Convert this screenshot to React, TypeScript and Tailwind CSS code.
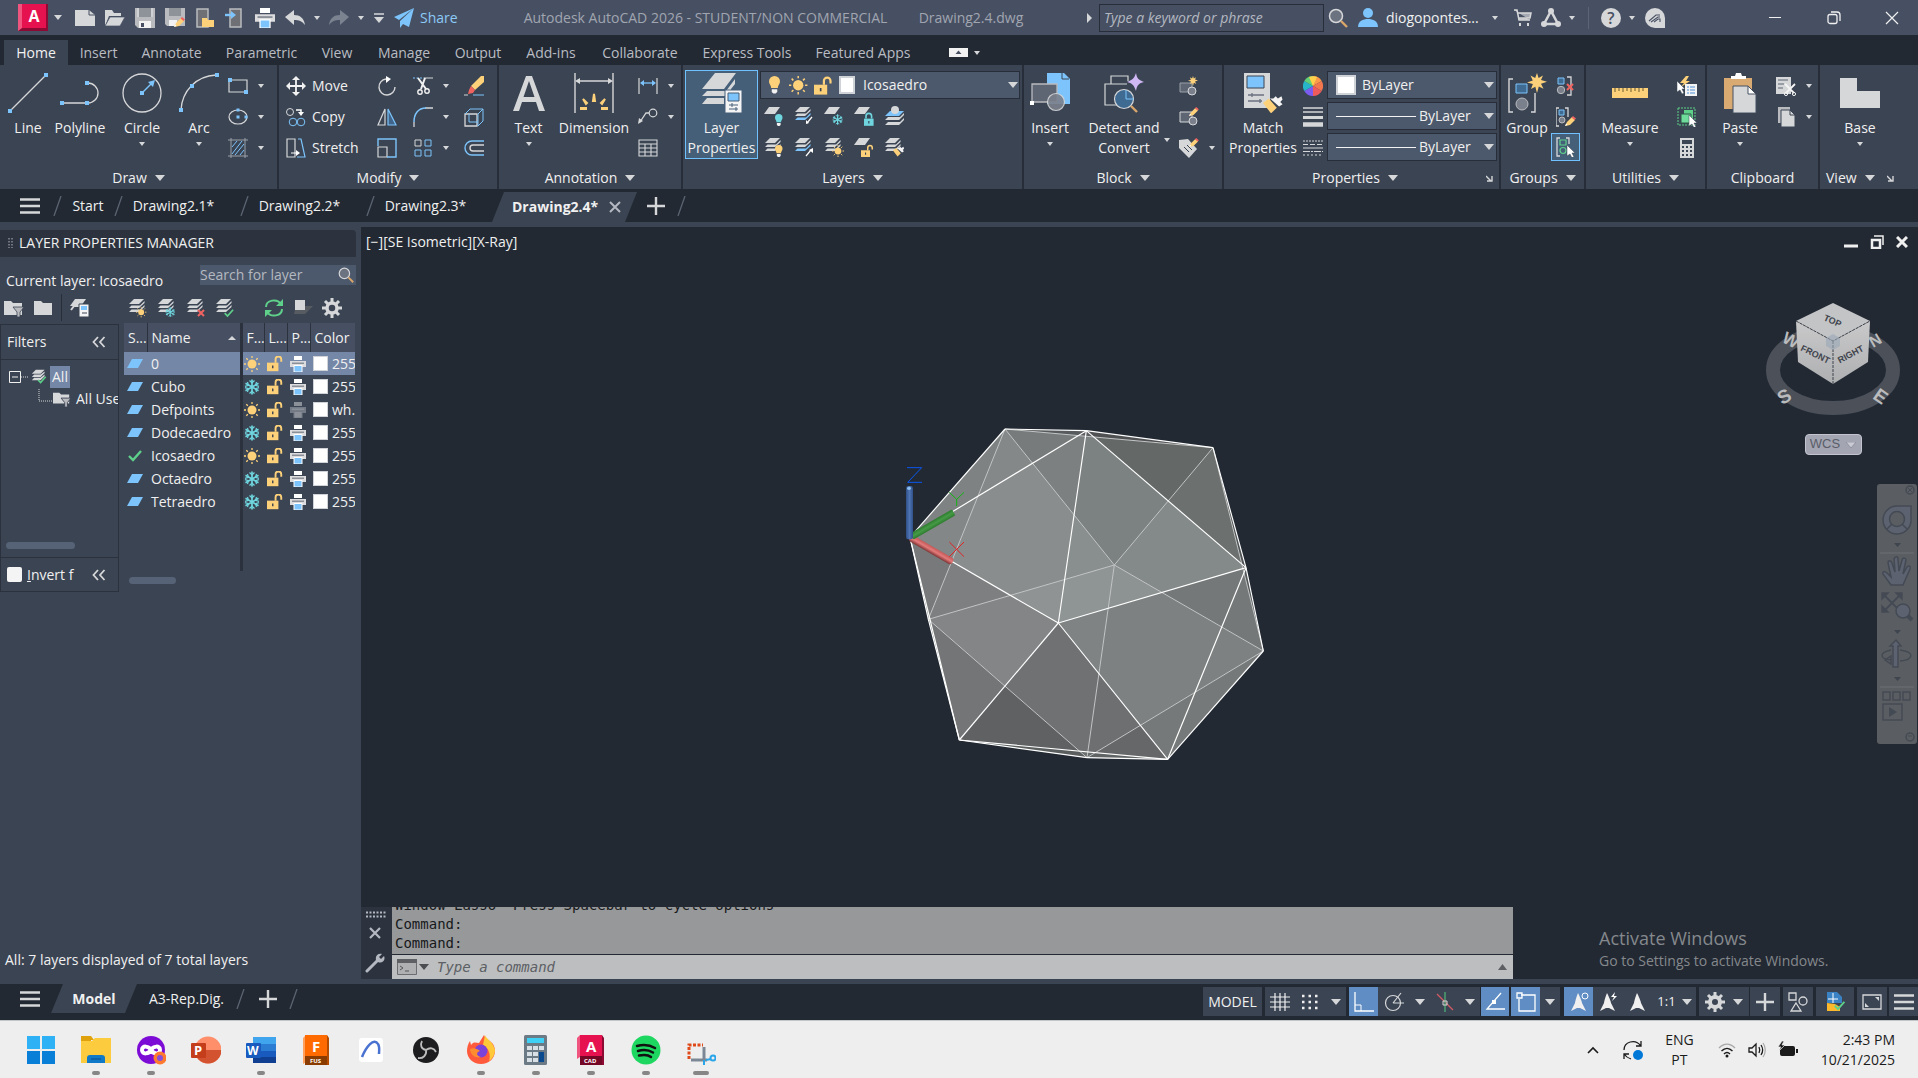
import React from 'react';
import { clsx } from 'clsx';

type GlyphProps = { x?: number; y?: number; s?: number };

const GREY = '#d6d7d9';
const BLUE = '#7cc4fb';
const GOLD = '#fdd17a';
const GREEN = '#5fd08a';
const CYAN = '#6fd6df';
const RED = '#ef6461';

const Svg: React.FC<{ w?: number; h?: number; vb?: string; className?: string; children: React.ReactNode }> = ({
  w = 20,
  h = w,
  vb,
  className,
  children,
}) => (
  <svg width={w} height={h} viewBox={vb ?? `0 0 ${w} ${h}`} fill="none" aria-hidden="true" className={clsx('shrink-0', className)}>
    {children}
  </svg>
);

const Caret: React.FC<{ big?: boolean; className?: string }> = ({ big, className }) =>
  big ? (
    <Svg w={10} h={6} className={className}>
      <path d="M0 0h10L5 6z" fill={GREY} />
    </Svg>
  ) : (
    <Svg w={6} h={4} className={className}>
      <path d="M0 0h6L3 4z" fill={GREY} />
    </Svg>
  );

/* ---------- glyph parts shared by several icons ---------- */

const at = ({ x = 0, y = 0, s = 1 }: GlyphProps) => `translate(${x} ${y}) scale(${s})`;

const Bulb: React.FC<GlyphProps & { color?: string }> = ({ color = GOLD, ...p }) => (
  <g transform={at(p)}>
    <path d="M5 0a5 5 0 0 1 5 5c0 2.500-2 3.500-2 6H2c0-2.500-2-3.500-2-6a5 5 0 0 1 5-5z" fill={color} />
    <path d="M2.500 12h5v2.500L6 16H4l-1.500-1.500z" fill="#f2f2f2" />
  </g>
);

const Sun: React.FC<GlyphProps> = (p) => (
  <g transform={at(p)}>
    <circle cx="8" cy="8" r="4.500" fill={GOLD} />
    <path d="M8 0v2M8 14v2M0 8h2M14 8h2M2.300 2.300l1.500 1.500M12.200 12.200l1.500 1.500M2.300 13.700l1.500-1.500M12.200 3.800l1.500-1.500" stroke={GOLD} strokeWidth="1.300" />
  </g>
);

const Snow: React.FC<GlyphProps> = (p) => (
  <g transform={at(p)} stroke={CYAN} strokeWidth="1.700">
    <path d="M8 0.500v15M1.500 4.200l13 7.600M1.500 11.800l13-7.600" />
    <path d="M5.500 1.500L8 4l2.500-2.500M5.500 14.500L8 12l2.500 2.500M1 7.300l3.400-.9-.9-3.400M15 8.700l-3.400.9.9 3.400M1 8.700l3.400.9-.9 3.400M15 7.300l-3.400-.9.9-3.400" strokeWidth="1.200" />
  </g>
);

const Lock: React.FC<GlyphProps & { open?: boolean; color?: string }> = ({ open = true, color = GOLD, ...p }) => (
  <g transform={at(p)}>
    <path d="M0 7h12v9H0z" fill={color} />
    <path d={open ? 'M9 7V3.500a3 3 0 0 1 6 0V6' : 'M2.500 7V4a3.500 3.500 0 0 1 7 0v3'} stroke={color} strokeWidth="2" />
    <path d="M5.300 10h1.500v3H5.300z" fill="#3b4453" />
  </g>
);

const Pencil: React.FC<GlyphProps> = (p) => (
  <g transform={at(p)}>
    <path d="M0 10l2-4 5-5 3 3-5 5z" fill={GOLD} />
    <path d="M6.500 1.500l1.500-1.500 3 2.500-1.500 1.500z" fill={RED} />
    <path d="M0 10l1.200-2.500 1.400 1.400z" fill="#fff" />
  </g>
);

const Star: React.FC<GlyphProps> = (p) => (
  <g transform={at(p)}>
    <path d="M10 0l1.600 5 4.400-2.500L14 7l6 1.800-6 2 2.500 5-4.700-2.300L10 20l-1.700-6.200L4 16l1.900-5L0 9.500l5.800-2L3.500 2.600l4.700 2.500z" fill={GOLD} />
  </g>
);

const Cursor: React.FC<GlyphProps> = (p) => (
  <g transform={at(p)}>
    <path d="M0 0l8 8H5l2 4-2 1-2-4-3 2z" fill="#fff" stroke="#3b4453" strokeWidth=".5" />
  </g>
);

const Brush: React.FC<GlyphProps> = (p) => (
  <g transform={at(p)}>
    <path d="M0 7l5-4 7 8-5 5z" fill={GOLD} />
    <path d="M6 3l3 0 2-2 2 2 3-2 1 3-2 2 2 2-3 2z" fill="#f4f4f4" />
  </g>
);

const Check: React.FC<GlyphProps> = (p) => (
  <g transform={at(p)}>
    <path d="M1 6l4 4 8-9" stroke={GREEN} strokeWidth="2.400" />
  </g>
);

const Cross: React.FC<GlyphProps> = (p) => (
  <g transform={at(p)}>
    <path d="M0 0l6 6M6 0L0 6" stroke={RED} strokeWidth="2" />
  </g>
);

const Stack: React.FC<{ blue?: number; children?: React.ReactNode }> = ({ blue, children }) => (
  <Svg>
    <path d="M6 1h10l-5 5H1z" fill={blue === 0 ? BLUE : GREY} />
    <path d="M1 10l2.500-2.500H12L16.500 3v2L11 10z" fill={blue === 1 ? BLUE : GREY} />
    <path d="M1 14l2.500-2.500H12L16.500 7v2L11 14z" fill={blue === 2 ? BLUE : GREY} />
    {children}
  </Svg>
);

const Sheet: React.FC<{ children?: React.ReactNode }> = ({ children }) => (
  <Svg>
    <path d="M5 1h11l-5 7H0z" fill={GREY} />
    {children}
  </Svg>
);

const Search: React.FC<{ className?: string }> = ({ className }) => (
  <Svg className={className}>
    <circle cx="8" cy="8" r="6.500" fill="#6c7380" stroke={GREY} strokeWidth="1.500" />
    <path d="M13 13l6 6" stroke="#d9a66b" strokeWidth="2.400" />
  </Svg>
);

const Printer: React.FC<{ off?: boolean; w?: number }> = ({ off, w = 16 }) => (
  <Svg w={w} vb="0 0 16 16">
    <path d="M4 0h8v4H4z" fill={off ? '#8a8f98' : '#fff'} />
    <path d="M0 5h16v6H0z" fill={off ? '#757b86' : '#dcdcde'} />
    <path d="M2 6.500h12v1.500H2z" fill="#8b9098" />
    <path d="M4 9.500h8V16H4z" fill={off ? '#8a8f98' : BLUE} stroke={off ? '#757b86' : '#fff'} />
  </Svg>
);

const Hamburger: React.FC = () => (
  <Svg w={20} h={16}>
    <path d="M0 1.500h20M0 8h20M0 14.500h20" stroke={GREY} strokeWidth="2.600" />
  </Svg>
);

const Plus: React.FC = () => (
  <Svg w={18}>
    <path d="M9 0v18M0 9h18" stroke={GREY} strokeWidth="2.400" />
  </Svg>
);

const Slash: React.FC<{ className?: string }> = ({ className }) => (
  <Svg w={9} h={20} className={className}>
    <path d="M8 0L1 20" stroke="#5b6472" strokeWidth="1.300" />
  </Svg>
);

const Launcher: React.FC = () => (
  <Svg w={7}>
    <path d="M0 1l5 5M6 1v5H1" stroke={GREY} strokeWidth="1.400" />
  </Svg>
);

/* ---------- ribbon building blocks ---------- */

const Panel: React.FC<{ title: string; className: string; launcher?: boolean; noCaret?: boolean; children: React.ReactNode }> = ({
  title,
  className,
  launcher,
  noCaret,
  children,
}) => (
  <section className={clsx('flex shrink-0 flex-col border-r-2 border-[#272e39]', className)}>
    <div className="flex h-[100px]">{children}</div>
    <div className="flex h-6 items-center pt-0.5">
      <button className="flex flex-1 items-center justify-center gap-2">
        {title}
        {!noCaret && <Caret big />}
      </button>
      {launcher && (
        <button className="mr-1.5" aria-label={`${title} settings`}>
          <Launcher />
        </button>
      )}
    </div>
  </section>
);

const Big: React.FC<{ label: string; className: string; caret?: boolean; children: React.ReactNode }> = ({ label, className, caret, children }) => (
  <button className={clsx('flex shrink-0 flex-col items-center pt-2', className)}>
    <span className="flex h-10 items-center justify-center">{children}</span>
    <span className="mt-[5px] text-center leading-5">{label}</span>
    {caret && <Caret className="mt-1" />}
  </button>
);

const Small: React.FC<{ name: string; caret?: boolean; children: React.ReactNode }> = ({ name, caret, children }) => (
  <button aria-label={name} className="flex h-[31px] items-center gap-[10px]">
    {children}
    {caret && <Caret />}
  </button>
);

const Tool: React.FC<{ label: string; children: React.ReactNode }> = ({ label, children }) => (
  <button className="flex h-[31px] items-center gap-1.5">
    {children}
    {label}
  </button>
);

const Column: React.FC<{ className?: string; children: React.ReactNode }> = ({ className, children }) => (
  <div className={clsx('flex shrink-0 flex-col pt-[5px]', className)}>{children}</div>
);

const dot = (x: number, y: number, s = 4) => <rect x={x - s / 2} y={y - s / 2} width={s} height={s} fill={BLUE} />;

/* ---------- title bar ---------- */

const TitleBar: React.FC = () => (
  <header className="flex h-[35px] shrink-0 items-center bg-[#475063] text-[#a0a5b0]">
    <button className="ml-[18px] flex items-center gap-1.5" aria-label="Application menu">
      <span className="flex h-[27px] w-[30px] items-center justify-center border-b-3 border-l-4 border-r-2 border-b-[#8c0a33] border-l-[#f0557f] border-r-[#8c0a33] bg-[#e6114f] text-base font-bold leading-5 text-white">
        A
      </span>
      <Caret big className="h-[5px] w-2" />
    </button>
    <div className="ml-[13px] flex items-center gap-[10px]">
      <button aria-label="New"><Svg><path d="M0 2h14l6 5v11H0z" fill={GREY} /><path d="M14 2v5h6" stroke="#475063" /></Svg></button>
      <button aria-label="Open"><Svg><path d="M0 18V2h7l2 3h7v3H4z" fill={GREY} /><path d="M5 9h15l-5 9H0z" fill={GREY} stroke="#475063" strokeWidth=".7" /></Svg></button>
      <button aria-label="Save"><Svg><path d="M0 0h20v20H3l-3-3z" fill="#b9bbbf" /><path d="M4 0h12v9H4z" fill="#8e9299" /><path d="M2 0h2v9H2zM16 0h2v9h-2z" fill="#d0d1d4" /><path d="M4 13h12v7H4z" fill="#f2f2f2" /><path d="M6 15h3v4H6z" fill="#475063" /></Svg></button>
      <button aria-label="Save as"><Svg><path d="M0 0h20v18H2l-2-2z" fill="#b9bbbf" /><path d="M4 0h12v8H4z" fill="#8e9299" /><path d="M4 12h8v6H4z" fill="#f2f2f2" /><Pencil x={9} y={9} /></Svg></button>
      <button aria-label="Open from web"><Svg><path d="M2 1h11v18H2z" fill="#6f7075" stroke="#b9bbbf" strokeWidth="1.500" /><path d="M7 19V10h5l1 2h6v7z" fill={GOLD} /></Svg></button>
      <button aria-label="Save to web"><Svg><path d="M5 1h11v18H5z" fill="#6f7075" stroke="#b9bbbf" strokeWidth="1.500" /><path d="M0 7h8" stroke={BLUE} strokeWidth="2.400" /><path d="M6 3l5 4-5 4z" fill={BLUE} /></Svg></button>
      <button aria-label="Plot"><Printer w={20} /></button>
      <button aria-label="Undo"><Svg><path d="M0 9l9-7v5c6 0 10 3 11 10-3-4-6-5-11-5v5z" fill={GREY} /></Svg></button>
    </div>
    <button className="ml-[9px]" aria-label="Undo history"><Caret /></button>
    <button className="ml-[9px]" aria-label="Redo"><Svg><path d="M20 9l-9-7v5C5 7 1 10 0 17c3-4 6-5 11-5v5z" fill="#7b8391" /></Svg></button>
    <button className="ml-[9px]" aria-label="Redo history"><Caret /></button>
    <button className="ml-[10px]" aria-label="Customize"><Svg w={10}><path d="M0 1h10" stroke={GREY} strokeWidth="1.500" /><path d="M0 4h10L5 10z" fill={GREY} /></Svg></button>
    <button className="ml-[10px] flex items-center gap-1.5 text-[#8ccaf7]">
      <Svg><path d="M20 0L0 9l5 3zM20 0L6 13v7l3-4 6 3z" fill={BLUE} /></Svg>
      Share
    </button>
    <span className="ml-[66px] w-[395px] whitespace-nowrap">Autodesk AutoCAD 2026 - STUDENT/NON COMMERCIAL</span>
    <span className="whitespace-nowrap">Drawing2.4.dwg</span>
    <span className="flex-1" />
    <Svg w={5} h={10}><path d="M0 0l5 5-5 5z" fill={GREY} /></Svg>
    <input
      type="text"
      aria-label="Type a keyword or phrase"
      placeholder="Type a keyword or phrase"
      className="ml-[7px] h-7 w-[225px] border border-[#272e39] bg-transparent px-1 italic placeholder:text-[#b4b8c0]"
    />
    <button aria-label="Search" className="ml-1"><Search /></button>
    <button className="ml-[10px] flex items-center gap-2 whitespace-nowrap text-[#f0f0f0]">
      <Svg><circle cx="10" cy="5" r="5" fill={BLUE} /><path d="M0 19c0-6 5-8 10-8s10 2 10 8z" fill={BLUE} /></Svg>
      <span className="w-[98px] text-left">diogopontes...</span>
      <Caret />
    </button>
    <button className="ml-4" aria-label="App store"><Svg w={18}><path d="M0 1h3l2 10h11M4 4h13l-1 5H5" stroke={GREY} strokeWidth="1.500" fill="#a5a9b2" /><path d="M5 14h2v3H5zM13 14h2v3h-2z" fill={GREY} /></Svg></button>
    <button className="ml-[9px] flex items-center gap-2" aria-label="Autodesk cloud">
      <Svg><path d="M10 3L3 16h14z" stroke={GREY} strokeWidth="2.500" /><circle cx="10" cy="3" r="3" fill={GREY} /><circle cx="3" cy="16" r="3" fill={GREY} /><circle cx="17" cy="16" r="3" fill={GREY} /></Svg>
      <Caret />
    </button>
    <span className="ml-[13px] h-[22px] w-px bg-[#5c6577]" />
    <button className="ml-3 flex items-center gap-2" aria-label="Help">
      <span className="flex size-5 items-center justify-center rounded-full bg-[#d6d7d9] text-base font-semibold leading-5 text-[#475063]">?</span>
      <Caret />
    </button>
    <button className="ml-2.5" aria-label="Assistant"><Svg><path d="M10 0a10 10 0 0 1 10 10v10H10a10 10 0 0 1 0-20z" fill={GREY} /><path d="M4 13l7-6h4M6 14l7-5h2M9 14l4-3h2v3" stroke="#475063" strokeWidth="1.100" /></Svg></button>
    <button className="ml-[103px]" aria-label="Minimize"><Svg w={14}><path d="M1 6.500h12" stroke="#f0f0f0" /></Svg></button>
    <button className="ml-[45px]" aria-label="Restore"><Svg w={14}><rect x="1" y="3.500" width="9" height="9" rx="2" stroke="#f0f0f0" strokeWidth="1.300" /><path d="M4 1h6a3 3 0 0 1 3 3v6" stroke="#f0f0f0" strokeWidth="1.300" /></Svg></button>
    <button className="ml-[44px] mr-[19px]" aria-label="Close"><Svg w={14}><path d="M1 1l12 12M13 1L1 13" stroke="#f0f0f0" strokeWidth="1.200" /></Svg></button>
  </header>
);

const ribbonTabs = [
  { label: 'Home', width: 'w-16' },
  { label: 'Insert', width: 'w-[61px]' },
  { label: 'Annotate', width: 'w-[85px]' },
  { label: 'Parametric', width: 'w-[95px]' },
  { label: 'View', width: 'w-14' },
  { label: 'Manage', width: 'w-[78px]' },
  { label: 'Output', width: 'w-[70px]' },
  { label: 'Add-ins', width: 'w-[76px]' },
  { label: 'Collaborate', width: 'w-[102px]' },
  { label: 'Express Tools', width: 'w-[112px]' },
  { label: 'Featured Apps', width: 'w-[120px]' },
];

const RibbonTabs: React.FC = () => (
  <nav className="flex h-[30px] shrink-0 items-end bg-[#222933] pl-1">
    {ribbonTabs.map((tab, i) => (
      <button key={tab.label} className={clsx('h-[25px] whitespace-nowrap', tab.width, i === 0 ? 'bg-[#3b4453] text-[#f2f2f2]' : 'text-[#b9bcc2]')}>
        {tab.label}
      </button>
    ))}
    <button className="ml-[26px] flex h-[25px] items-center gap-1.5" aria-label="Minimize ribbon">
      <Svg w={19} h={9}><path d="M0 0h19v9H0z" fill="#f2f2f2" /><path d="M6.500 6h6l-3-3.500z" fill="#475063" /></Svg>
      <Caret />
    </button>
  </nav>
);

/* ---------- ribbon ---------- */

const DrawPanel: React.FC = () => (
  <Panel title="Draw" className="w-[279px]">
    <Big label="Line" className="ml-1 w-12">
      <Svg w={40}><path d="M2 38L38 2" stroke={GREY} strokeWidth="1.300" />{dot(2, 38)}{dot(38, 2)}</Svg>
    </Big>
    <Big label="Polyline" className="w-14">
      <Svg w={40}><path d="M2 30h26a10 10 0 0 0 0-20" stroke={GREY} strokeWidth="1.300" />{dot(2, 30)}{dot(27, 30)}{dot(27, 10)}</Svg>
    </Big>
    <Big label="Circle" className="ml-1.5 w-14" caret>
      <Svg w={40}><circle cx="20" cy="20" r="19" stroke={GREY} strokeWidth="1.300" /><path d="M20 20L31 9" stroke={BLUE} strokeWidth="1.500" /><path d="M33 7l-7 2 5 5z" fill={BLUE} />{dot(20, 20)}</Svg>
    </Big>
    <Big label="Arc" className="w-[58px]" caret>
      <Svg w={40}><path d="M2 37C3 18 17 3 37 2" stroke={GREY} strokeWidth="1.300" />{dot(2, 37)}{dot(13, 13)}{dot(38, 2)}</Svg>
    </Big>
    <Column>
      <Small name="Rectangle" caret><Svg><path d="M1 4h18v12H1z" stroke={GREY} strokeWidth="1.200" />{dot(2, 4)}{dot(18, 16)}</Svg></Small>
      <Small name="Ellipse" caret><Svg><ellipse cx="10" cy="10" rx="9" ry="7" stroke={GREY} strokeWidth="1.200" />{dot(10, 3, 3)}{dot(10, 10, 3)}{dot(18, 10, 3)}</Svg></Small>
      <Small name="Hatch" caret><Svg><path d="M3 0v20M17 0v20M0 2h20M0 18h20" stroke="#9aa0aa" /><path d="M4 9l5-6M4 16L14 3M7 17l9-11M12 17l4-5" stroke={BLUE} /></Svg></Small>
    </Column>
  </Panel>
);

const ModifyPanel: React.FC = () => (
  <Panel title="Modify" className="w-[220px]">
    <Column className="ml-[7px] w-[91px]">
      <Tool label="Move"><Svg><path d="M10 3v14M3 10h14" stroke="#f2f2f2" strokeWidth="1.800" /><path d="M10 0l4 4H6zM10 20l4-4H6zM0 10l4-4v8zM20 10l-4-4v8z" fill="#f2f2f2" /></Svg></Tool>
      <Tool label="Copy"><Svg><circle cx="4" cy="5" r="3.500" stroke={GREY} /><circle cx="7" cy="15" r="3.800" stroke={BLUE} /><circle cx="15" cy="15" r="3.800" stroke={BLUE} /><path d="M10 3h5v3" stroke="#fff" strokeWidth="1.500" /><path d="M12 5h6l-3 4z" fill="#fff" /></Svg></Tool>
      <Tool label="Stretch"><Svg><path d="M1 1h8v18H1z" stroke={GREY} strokeWidth="1.200" /><path d="M12 1h3l4 18h-8" stroke={BLUE} strokeWidth="1.200" /><path d="M5 15h6" stroke="#fff" /><path d="M10 12l4 3-4 3z" fill="#fff" /></Svg></Tool>
    </Column>
    <Column className="w-9">
      <Small name="Rotate"><Svg><path d="M9 3a8 8 0 1 0 9 8" stroke={GREY} strokeWidth="1.400" /><path d="M9 0l5 3-5 4z" fill="#fff" /></Svg></Small>
      <Small name="Mirror"><Svg><path d="M8 2v16H1z" stroke={GREY} strokeWidth="1.200" /><path d="M11 2v16h8z" fill="#40648a" stroke={BLUE} strokeWidth="1.200" /></Svg></Small>
      <Small name="Scale"><Svg><path d="M1 9h9v10H1z" stroke={GREY} strokeWidth="1.200" /><path d="M1 8V1h18v18h-9" stroke={BLUE} strokeWidth="1.400" /></Svg></Small>
    </Column>
    <Column className="w-[51px]">
      <Small name="Trim" caret><Svg><path d="M0 2h11" stroke={BLUE} strokeDasharray="2 1.500" /><path d="M11 2h9" stroke={GREY} /><path d="M5 2l8 11M12 2L8 13" stroke="#f2f2f2" strokeWidth="2" /><circle cx="7" cy="16" r="2.200" stroke="#f2f2f2" strokeWidth="1.400" /><circle cx="14" cy="15" r="2.200" stroke="#f2f2f2" strokeWidth="1.400" /></Svg></Small>
      <Small name="Fillet" caret><Svg><path d="M1 20v-5M12 1h8" stroke={GREY} strokeWidth="1.300" /><path d="M1 15C1 7 5 1 13 1" stroke={BLUE} strokeWidth="1.500" /></Svg></Small>
      <Small name="Array" caret><Svg><path d="M2 2h6v6H2z" stroke={GREY} /><path d="M12 2h6v6h-6zM2 12h6v6H2zM12 12h6v6h-6z" stroke={BLUE} /></Svg></Small>
    </Column>
    <Column>
      <Small name="Erase"><Svg><path d="M7 10L17 0h3v6l-9 8z" fill={GOLD} /><path d="M7 10l4 4-2 3-5 1 1-4z" fill={RED} /><path d="M0 19h4" stroke={GREY} /><path d="M9 19h11" stroke={BLUE} /></Svg></Small>
      <Small name="Explode"><Svg><path d="M1 7h12v12H1z" stroke={GREY} strokeWidth="1.300" /><path d="M1 7l5-5h13l-5 5M19 2v12l-5 5M5 7v8h9M14 7v12" stroke={BLUE} /></Svg></Small>
      <Small name="Offset"><Svg><path d="M20 3H8a7 7 0 0 0 0 14h12" stroke={BLUE} strokeWidth="1.400" /><path d="M20 7H9a3 3 0 0 0 0 6h11" stroke={GREY} strokeWidth="1.400" /></Svg></Small>
    </Column>
  </Panel>
);

const AnnotationPanel: React.FC = () => (
  <Panel title="Annotation" className="w-[184px]">
    <Big label="Text" className="w-[59px]" caret>
      <Svg w={34} h={38}><path d="M1 37L14 2h6l13 35h-6l-3-9H10l-3 9zM11.500 23h11L17 7z" fill={GREY} /></Svg>
    </Big>
    <Big label="Dimension" className="w-[72px]">
      <Svg w={40}><path d="M1 0v40M39 0v40M3 8h34" stroke={GREY} strokeWidth="1.400" /><path d="M1 8l5-3v6zM39 8l-5-3v6z" fill={GREY} /><path d="M19 28l1-7 1 7zM12 31l-3-5 4 4zM28 31l3-5-4 4zM7 36v-1l5 0v1zM33 36v-1l-5 0v1z" fill={GOLD} stroke={GOLD} strokeWidth="2" /></Svg>
    </Big>
    <Column className="ml-2">
      <Small name="Linear" caret><Svg><path d="M1 2v16M19 2v16" stroke={GREY} strokeWidth="1.200" /><path d="M3 7h14" stroke={BLUE} strokeWidth="1.300" /><path d="M2 7l4-3v6zM18 7l-4-3v6z" fill={BLUE} /></Svg></Small>
      <Small name="Leader" caret><Svg><circle cx="15" cy="6" r="3.800" stroke={GREY} strokeWidth="1.200" /><path d="M11 6H8l-6 9" stroke={GREY} strokeWidth="1.300" /><path d="M0 17l1-6 4 3z" fill={GREY} /></Svg></Small>
      <Small name="Table"><Svg><path d="M1 2h18v16H1zM1 6h18M1 10h18M1 14h18M7 6v12M13 6v12" stroke={GREY} strokeWidth="1.100" /></Svg></Small>
    </Column>
  </Panel>
);

const LayersPanel: React.FC = () => (
  <Panel title="Layers" className="w-[341px]">
    <button className="ml-0.5 mt-[5px] flex h-[89px] w-[73px] shrink-0 flex-col items-center border border-[#6fc1ff] bg-[#465f78] pt-[2px] leading-5">
      <Svg w={40} className="mb-[5px]">
        <path d="M13 0h21L22 16H0z" fill={GREY} />
        <path d="M0 23l5-5h19l9-12v5l-4 5v7z" fill={GREY} />
        <path d="M0 31l5-6h17v6z" fill={GREY} />
        <path d="M23 17h17v23H23z" fill="#f4f4f4" stroke="#465f78" />
        <path d="M26 20h11v8H26z" fill={BLUE} stroke="#465f78" />
        <path d="M27 32h9M27 36h9M30 30v4M34 34v4" stroke="#465f78" />
      </Svg>
      <span>Layer</span>
      <span>Properties</span>
    </button>
    <div className="ml-0.5 flex w-[260px] flex-col">
      <label className="mt-1.5 flex h-7 items-center border border-[#272e39] bg-[#4c586b] pl-2">
        <Svg w={86} h={20}>
          <Bulb y={1} s={1.1} x={0} />
          <Sun x={20} y={1} s={1.15} />
          <Lock x={45} y={2} s={1.1} />
          <path d="M71 2h14v16H71z" fill="#fff" stroke="#cfd2d6" strokeWidth="2" />
        </Svg>
        <select aria-label="Layer" className="ml-2 flex-1 appearance-none bg-transparent">
          <option>Icosaedro</option>
        </select>
        <Caret big className="mr-px" />
      </label>
      <div className="mt-px grid grid-cols-[repeat(5,30px)] pl-1">
        <Small name="Layer off"><Sheet><Bulb color={CYAN} x={11} y={8} s={0.75} /></Sheet></Small>
        <Small name="Layer isolate"><Stack blue={2}><path d="M18 11l-5 6" stroke="#fff" strokeWidth="1.200" /><path d="M12 18v-4l3 3z" fill="#fff" /></Stack></Small>
        <Small name="Layer freeze"><Sheet><Snow x={8} y={8} s={0.7} /></Sheet></Small>
        <Small name="Layer lock"><Sheet><Lock open={false} color={CYAN} x={10} y={7} s={0.8} /></Sheet></Small>
        <Small name="Make current"><Svg><path d="M6 5h14l-5 5H1z" fill={BLUE} /><circle cx="11" cy="4" r="4" fill={GREY} /><path d="M1 14l3-3h12l4-4v2l-5 5zM1 19l3-3h12l4-4v2l-5 5z" fill={GREY} /></Svg></Small>
        <Small name="Turn all layers on"><Stack><Bulb x={11} y={8} s={0.75} /></Stack></Small>
        <Small name="Layer unisolate"><Stack blue={2}><path d="M12 19l5-6" stroke="#fff" strokeWidth="1.200" /><path d="M19 11v5l-4-3z" fill="#fff" /></Stack></Small>
        <Small name="Thaw all layers"><Stack><Sun x={8} y={8} s={0.75} /></Stack></Small>
        <Small name="Unlock layer"><Sheet><Lock x={7} y={8} s={0.75} /></Sheet></Small>
        <Small name="Match layer"><Stack><Brush x={9} y={9} s={0.65} /></Stack></Small>
      </div>
    </div>
  </Panel>
);

const BlockPanel: React.FC = () => (
  <Panel title="Block" className="w-[200px]">
    <Big label="Insert" className="w-[52px]" caret>
      <Svg w={40}><path d="M17 -2h15l8 8v25H17z" fill={BLUE} /><path d="M32 -1v7h7" stroke="#3b4453" /><path d="M2 11h25v18H2z" fill="#5e6673" stroke="#b9bbbf" strokeWidth="1.300" /><circle cx="26" cy="29" r="8.500" fill="#7b818c" stroke={GREY} strokeWidth="1.200" opacity=".9" /><path d="M0 28h4v4H0z" fill="#fff" /></Svg>
    </Big>
    <Big label="Detect and Convert" className="ml-2 w-[80px]">
      <Svg w={40}><path d="M7 11V3h17v5M20 32H1V11h22" stroke={GREY} strokeWidth="1.200" /><circle cx="20" cy="26" r="9.500" fill="#3f6a92" stroke={GREY} strokeWidth="1.200" /><path d="M22 17v9h8" stroke={BLUE} /><path d="M27 33l6 6" stroke="#d9a66b" strokeWidth="2.400" /><path d="M32 0c1 6 3 7 8 9-5 1-7 3-8 9-2-6-4-8-9-9 5-2 7-3 9-9z" fill="#d0b8f5" /></Svg>
    </Big>
    <Caret className="mt-[73px]" />
    <Column className="ml-[9px]">
      <Small name="Create block"><Svg><path d="M1 7h12v9H1z" fill="#5e6673" stroke="#9aa0aa" /><circle cx="13" cy="15" r="4" fill="#7b818c" stroke={GREY} /><Star x={9} y={0} s={0.5} /></Svg></Small>
      <Small name="Edit block"><Svg><path d="M1 5h12v10H1z" fill="#5e6673" stroke={GREY} /><circle cx="14" cy="14" r="4" fill="#7b818c" stroke={GREY} /><Pencil x={10} y={0} s={0.9} /></Svg></Small>
      <Small name="Edit attributes" caret><Svg><path d="M0 2l9-1 9 10-8 9L0 10z" fill={GREY} /><path d="M5 9l5 5M8 7l5 5" stroke="#3b4453" /><Pencil x={10} y={0} s={0.9} /></Svg></Small>
    </Column>
  </Panel>
);

const PropertyCombo: React.FC<{ name: string; line?: boolean }> = ({ name, line }) => (
  <label className="mb-[3px] flex h-7 items-center border border-[#272e39] bg-[#4c586b] pl-2">
    {line ? <span className="h-px w-20 bg-[#f2f2f2]" /> : <span className="size-5 border-2 border-[#cfd2d6] bg-white" />}
    <select aria-label={name} className={clsx('flex-1 appearance-none bg-transparent', line ? 'ml-[3px]' : 'ml-1.5')}>
      <option>ByLayer</option>
    </select>
    <Caret big className="mr-0.5" />
  </label>
);

const PropertiesPanel: React.FC = () => (
  <Panel title="Properties" className="w-[277px]" launcher>
    <Big label="Match Properties" className="w-[78px]">
      <Svg w={40}><path d="M1 0h26v35H1z" fill={GREY} /><path d="M4 3h17v12H4z" fill={BLUE} stroke="#3b4453" /><path d="M5 22h16M9 20v4M5 28h14M17 26v4" stroke="#6b7280" strokeWidth="1.300" /><Brush x={20} y={22} s={1.15} /></Svg>
    </Big>
    <Column className="w-[25px] pl-px">
      <Small name="Color">
        <Svg>
          <path d="M10 10V0a10 10 0 0 1 8.700 5z" fill="#fb9a4b" /><path d="M10 10l8.700-5a10 10 0 0 1 0 10z" fill="#f2774e" />
          <path d="M10 10l8.700 5A10 10 0 0 1 10 20z" fill="#ef5b5b" /><path d="M10 10v10a10 10 0 0 1-8.700-5z" fill="#7c5cf0" />
          <path d="M10 10l-8.700 5a10 10 0 0 1 0-10z" fill="#26b5c9" /><path d="M10 10L1.300 5A10 10 0 0 1 10 0z" fill="#63cf77" /><path d="M10 10L6 1a10 10 0 0 1 8 0z" fill="#ffd04a" />
        </Svg>
      </Small>
      <Small name="Lineweight"><Svg><path d="M0 1h20M0 5h20" stroke={GREY} strokeWidth="1.300" /><path d="M0 10.500h20" stroke={GREY} strokeWidth="3" /><path d="M0 17.500h20" stroke={GREY} strokeWidth="4.500" /></Svg></Small>
      <Small name="Linetype"><Svg><path d="M0 3h20" stroke={GREY} strokeDasharray="2 1" /><path d="M0 6.500h20" stroke={GREY} strokeDasharray="5 2" /><path d="M0 10h20" stroke={GREY} /><path d="M0 13.500h20" stroke={GREY} strokeDasharray="7 1 2 1" /><path d="M0 17h20" stroke={GREY} strokeDasharray="2 2" /></Svg></Small>
    </Column>
    <div className="mr-[2px] flex min-w-0 flex-1 flex-col pt-1.5">
      <PropertyCombo name="Object color" />
      <PropertyCombo name="Lineweight" line />
      <PropertyCombo name="Linetype" line />
    </div>
  </Panel>
);

const GroupsPanel: React.FC = () => (
  <Panel title="Groups" className="w-[85px]">
    <Big label="Group" className="ml-0.5 w-12">
      <Svg w={40}><path d="M6 6H2v33h4M24 39h4V20" stroke={GREY} strokeWidth="1.400" /><path d="M9 11h11v9H9z" fill="#3f6a92" stroke={BLUE} /><circle cx="15" cy="31" r="6" fill="#7b818c" stroke="#b9bbbf" /><Star x={20} y={0} /></Svg>
    </Big>
    <Column className="items-center">
      <Small name="Ungroup"><Svg><path d="M2 2h6v6H2z" fill="#3f6a92" stroke={BLUE} /><circle cx="5" cy="14" r="3.700" fill="#7b818c" stroke="#b9bbbf" /><path d="M11 1h4v18h-4" stroke={GREY} strokeWidth="1.300" /><Cross x={11} y={8} /></Svg></Small>
      <Small name="Group edit"><Svg><path d="M3 1H0v18h3M9 1h3v9" stroke={GREY} strokeWidth="1.300" /><path d="M3 3h5v5H3z" fill="#3f6a92" stroke={BLUE} /><circle cx="6" cy="13" r="3" fill="#7b818c" stroke="#b9bbbf" /><Pencil x={9} y={9} /></Svg></Small>
      <button aria-label="Group selection" className="mt-px flex h-7 w-[29px] items-center justify-center border border-[#6fc1ff] bg-[#465f78]">
        <Svg><path d="M4 1H1v18h3M10 1h3v6" stroke={GREY} strokeWidth="1.300" /><path d="M4 3h6v5H4z" stroke={GREEN} strokeWidth="1.200" /><circle cx="7" cy="13.500" r="3" stroke={GREEN} strokeWidth="1.200" /><Cursor x={11} y={8} /></Svg>
      </button>
    </Column>
  </Panel>
);

const UtilitiesPanel: React.FC = () => (
  <Panel title="Utilities" className="w-[121px]">
    <Big label="Measure" className="w-[88px]" caret>
      <Svg w={36} h={10}><path d="M0 0h36v10H0z" fill={GOLD} /><path d="M3 0v4M7 0v3M11 0v4M15 0v3M19 0v4M23 0v3M27 0v4M31 0v3" stroke="#6b5a33" /></Svg>
    </Big>
    <Column className="ml-[3px]">
      <Small name="Quick select"><Svg><path d="M9 0L3 7h4l-3 4 9-6H9l3-5z" fill={GOLD} /><Cursor x={0} y={5} /><path d="M8 8h12v12H8z" fill="#f4f4f4" /><path d="M10 11h2M13 11h5M10 14h2M13 14h5M10 17h2M13 17h5" stroke="#4a8fd6" /></Svg></Small>
      <Small name="Select all"><Svg><path d="M1 1h17v17H1z" stroke={GREEN} strokeDasharray="2 1" /><path d="M7 3h9v9H7z" fill={GREEN} /><path d="M4 7h10v9H4z" fill="#6fdc9c" stroke="#2f5547" /><Cursor x={12} y={8} /></Svg></Small>
      <Small name="Calculator"><Svg><path d="M3 0h14v20H3z" fill={GREY} /><path d="M5 2h10v4H5z" fill="#3b4453" /><path d="M5 8h2v2H5zM9 8h2v2H9zM13 8h2v2h-2zM5 12h2v2H5zM9 12h2v2H9zM13 12h2v2h-2zM5 16h2v2H5zM9 16h2v2H9zM13 16h2v2h-2z" fill="#3b4453" /></Svg></Small>
    </Column>
  </Panel>
);

const ClipboardPanel: React.FC = () => (
  <Panel title="Clipboard" className="w-[113px]" noCaret>
    <Big label="Paste" className="w-[66px]" caret>
      <Svg w={34} h={40}><path d="M1 5h28v31H1z" fill="#d9ab72" /><path d="M8 6V3h4l1-3h5l1 3h4v3z" fill="#fff" /><path d="M10 13h15l8 8v19H10z" fill={GREY} stroke="#475063" /><path d="M25 13l8 8h-8z" fill="#fff" stroke="#475063" /></Svg>
    </Big>
    <Column className="ml-[3px]">
      <Small name="Cut" caret><Svg><path d="M0 1h15v17H0z" fill={GREY} /><path d="M2 4h10M2 8h6M2 12h5" stroke="#5b6472" /><path d="M9 8l9 9M19 8l-9 9" stroke="#f4f4f4" strokeWidth="1.800" /><circle cx="10" cy="18" r="1.600" stroke="#f4f4f4" /><circle cx="18" cy="18" r="1.600" stroke="#f4f4f4" /></Svg></Small>
      <Small name="Copy clip" caret><Svg><path d="M2 0h12v16H2z" fill="#b9bbbf" /><path d="M5 3h9l5 5v12H5z" fill={GREY} stroke="#3b4453" /><path d="M14 3v5h5" stroke="#3b4453" /></Svg></Small>
    </Column>
  </Panel>
);

const Ribbon: React.FC = () => (
  <div className="flex h-[124px] shrink-0 overflow-hidden bg-[#3b4453]">
    <DrawPanel />
    <ModifyPanel />
    <AnnotationPanel />
    <LayersPanel />
    <BlockPanel />
    <PropertiesPanel />
    <GroupsPanel />
    <UtilitiesPanel />
    <ClipboardPanel />
    <section className="flex flex-col">
      <div className="flex h-[100px]">
        <Big label="Base" className="w-20" caret>
          <Svg w={40} h={30}><path d="M0 0h17v13h23v17H0z" fill={GREY} /></Svg>
        </Big>
      </div>
      <div className="flex h-6 items-center gap-3 pl-1.5 pt-0.5">
        <button className="flex items-center gap-2">View <Caret big /></button>
        <button aria-label="View settings"><Launcher /></button>
      </div>
    </section>
  </div>
);

const FileTabs: React.FC = () => (
  <nav className="flex h-[33px] shrink-0 items-center bg-[#222933] pl-5 pt-px text-[#f0f0f0]">
    <button aria-label="Drawings menu"><Hamburger /></button>
    <Slash className="ml-[13px]" />
    <button className="w-[52px]">Start</button>
    <Slash />
    {['Drawing2.1*', 'Drawing2.2*', 'Drawing2.3*'].map((name, i) => (
      <React.Fragment key={name}>
        {i > 0 && <Slash />}
        <button className="w-[117px] pr-4">{name}</button>
      </React.Fragment>
    ))}
    <div className="flex h-[30px] w-[145px] items-center self-end bg-[#3b4453] pl-5 [clip-path:polygon(12px_0,100%_0,calc(100%-12px)_100%,0_100%)]">
      <button className="w-[97px] text-left font-bold">Drawing2.4*</button>
      <button aria-label="Close drawing"><Svg w={12}><path d="M1 1l10 10M11 1L1 11" stroke="#b4b8c0" strokeWidth="2" /></Svg></button>
    </div>
    <button aria-label="New drawing" className="ml-[10px]"><Plus /></button>
    <Slash className="ml-3" />
  </nav>
);

/* ---------- layer properties manager ---------- */

type Layer = { name: string; status: 'layer' | 'current'; frozen: boolean; plot: boolean; color: string };

const layers: Layer[] = [
  { name: '0', status: 'layer', frozen: false, plot: true, color: '255' },
  { name: 'Cubo', status: 'layer', frozen: true, plot: true, color: '255' },
  { name: 'Defpoints', status: 'layer', frozen: false, plot: false, color: 'wh.' },
  { name: 'Dodecaedro', status: 'layer', frozen: true, plot: true, color: '255' },
  { name: 'Icosaedro', status: 'current', frozen: false, plot: true, color: '255' },
  { name: 'Octaedro', status: 'layer', frozen: true, plot: true, color: '255' },
  { name: 'Tetraedro', status: 'layer', frozen: true, plot: true, color: '255' },
];

const Folder: React.FC<{ filter?: boolean }> = ({ filter }) => (
  <Svg>
    <path d="M0 3h7l2 2h9v12H0z" fill={GREY} />
    {filter && <path d="M9 9h11l-4 5v5h-3v-5z" fill="#b9bbbf" stroke="#3b4453" strokeWidth=".8" />}
  </Svg>
);

const Chevrons: React.FC = () => (
  <Svg w={14} h={12}><path d="M6 1L1.500 6 6 11M12.500 1L8 6l4.500 5" stroke={GREY} strokeWidth="1.800" /></Svg>
);

const LayerTable: React.FC = () => (
  <table className="w-[231px] table-fixed border-collapse">
    <colgroup>
      <col className="w-[23px]" />
      <col className="w-[94px]" />
      <col className="w-[23px]" />
      <col className="w-[23px]" />
      <col className="w-[23px]" />
      <col />
    </colgroup>
    <thead>
      <tr className="h-[29px] bg-[#475063] text-left [&>th]:overflow-hidden [&>th]:whitespace-nowrap [&>th]:border-r [&>th]:border-[#2b323d] [&>th]:p-0 [&>th]:pl-1 [&>th]:font-normal">
        <th>S...</th>
        <th className="border-r-3!">
          <span className="flex items-center justify-between pr-1">
            Name
            <Svg w={8} h={4}><path d="M0 4h8L4 0z" fill={GREY} /></Svg>
          </span>
        </th>
        <th>F...</th>
        <th>L...</th>
        <th>P...</th>
        <th className="border-r-0!">Color</th>
      </tr>
    </thead>
    <tbody>
      {layers.map((layer, i) => (
        <tr key={layer.name} className={clsx('h-[23px] [&>td]:overflow-hidden [&>td]:whitespace-nowrap [&>td]:p-0', i === 0 && 'bg-[#7487a7]')}>
          <td className="pl-[3px]!">
            {layer.status === 'current' ? <Svg w={16} h={12}><Check x={1} y={0} /></Svg> : <Svg w={16} h={9}><path d="M5 0h11l-5 9H0z" fill={BLUE} /></Svg>}
          </td>
          <td className="border-r-3 border-[#2b323d] pl-1! leading-5">{layer.name}</td>
          <td className="pl-px!"><Svg w={16}>{layer.frozen ? <Snow /> : <Sun />}</Svg></td>
          <td className="pl-[3px]!"><Svg w={16}><Lock s={0.95} /></Svg></td>
          <td className="pl-[3px]!"><Printer off={!layer.plot} /></td>
          <td className="pl-[3px]!">
            <span className="flex items-center gap-1 leading-5">
              <span className="size-[15px] shrink-0 border border-[#cfd2d6] bg-white" />
              {layer.color}
            </span>
          </td>
        </tr>
      ))}
      <tr className="h-[58px]">
        <td />
        <td className="border-r-3 border-[#2b323d]" />
        <td colSpan={4} />
      </tr>
    </tbody>
  </table>
);

const LayerManager: React.FC = () => (
  <aside className="flex w-[361px] shrink-0 flex-col bg-[#3b4453] pt-2">
    <div className="flex h-[27px] w-[356px] shrink-0 items-center rounded-tr bg-[#2c333f] pb-0.5 pl-2">
      <Svg w={5} h={10}><path d="M1 0v10M4 0v10" stroke="#b4b8c0" strokeDasharray="1.500 1.500" /></Svg>
      <span className="ml-1.5">LAYER PROPERTIES MANAGER</span>
    </div>
    <div className="mt-2 flex h-[29px] w-[356px] shrink-0 justify-between pl-1.5">
      <span className="pt-1.5">Current layer: Icosaedro</span>
      <span className="flex h-5 w-[156px] items-center bg-[#4c586b]">
        <input type="text" aria-label="Search for layer" placeholder="Search for layer" className="w-full min-w-0 flex-1 bg-transparent placeholder:text-[#b4b8c0]" />
        <Search className="mr-0.5 h-4 w-4" />
      </span>
    </div>
    <div className="flex h-[27px] shrink-0 items-center pl-1">
      <button aria-label="New property filter"><Folder filter /></button>
      <button aria-label="New group filter" className="ml-[10px]"><Folder /></button>
      <span className="ml-[7px] h-full w-px bg-[#272e39]" />
      <button aria-label="Layer states" className="ml-2"><Sheet><path d="M1 12l3-4h8" stroke={GREY} strokeWidth="2" /><path d="M9 6h10v13H9z" fill="#f4f4f4" stroke="#3b4453" /><path d="M11 8h6v4h-6z" fill={BLUE} /><path d="M12 15h5" stroke="#3b4453" /></Sheet></button>
      <div className="ml-[38px] flex gap-[9px]">
        <button aria-label="New layer"><Stack><Sun x={8} y={9} s={0.65} /></Stack></button>
        <button aria-label="New layer frozen"><Stack><Snow x={8} y={9} s={0.65} /></Stack></button>
        <button aria-label="Delete layer"><Stack><Cross x={12} y={12} /></Stack></button>
        <button aria-label="Set current"><Stack><Check x={9} y={11} s={0.7} /></Stack></button>
      </div>
      <button aria-label="Refresh" className="ml-[29px]"><Svg><path d="M2 9c0-7 11-9 15-3M18 11c0 7-11 9-15 3" stroke={GREEN} strokeWidth="2" /><path d="M19 1v7h-7zM1 19v-7h7z" fill={GREEN} /></Svg></button>
      <button aria-label="Toggle override highlight" className="ml-[10px]"><Svg><path d="M2 8l-2 8h11l8-8z" fill="#575c63" /><path d="M1 2h10v10H1z" fill={GREY} /></Svg></button>
      <button aria-label="Settings" className="ml-[8px]"><Svg><circle cx="10" cy="10" r="5" stroke={GREY} strokeWidth="3.500" /><path d="M10 0v4M10 16v4M0 10h4M16 10h4M3 3l3 3M14 14l3 3M3 17l3-3M14 6l3-3" stroke={GREY} strokeWidth="3" /></Svg></button>
    </div>
    <div className="flex shrink-0">
      <div className="mt-[3px] flex h-[268px] w-[119px] flex-col border border-[#2b323d]">
        <div className="flex h-[35px] items-center justify-between border-b border-[#2b323d] pl-1.5 pr-3">
          Filters
          <button aria-label="Collapse filters"><Chevrons /></button>
        </div>
        <div className="flex flex-1 flex-col overflow-hidden pt-1.5">
          <div className="flex items-center pl-2 leading-[22px]">
            <Svg w={20} h={12}><path d="M.5.500h11v11H.5zM3 6h6" stroke="#f0f0f0" /><path d="M12 6h8" stroke={GREY} strokeDasharray="1 1" /></Svg>
            <span className="mx-0.5"><Svg w={16} vb="0 0 20 20"><path d="M6 1h11l-5 5H1zM1 10l3-3h8l5-4v2l-5 5zM1 14l3-3h8l5-4v2l-5 5z" fill={GREY} /><Check x={8} y={9} s={0.8} /></Svg></span>
            <span className="ml-px bg-[#7487a7] px-0.5">All</span>
          </div>
          <div className="flex items-center whitespace-nowrap pl-9 leading-[22px]">
            <Svg w={16} h={20}><path d="M2 0v12h13" stroke={GREY} strokeDasharray="1 1" /></Svg>
            <Svg w={18} vb="0 0 20 20" className="mr-[5px]"><path d="M0 3h7l2 2h9v10H0z" fill={GREY} /><path d="M9 9h11l-4 5v5h-3v-5z" fill="#b9bbbf" stroke="#3b4453" /></Svg>
            All Use
          </div>
          <span className="mb-2 ml-[5px] mt-auto h-[7px] w-[69px] rounded-full bg-[#566377]" />
        </div>
        <div className="flex h-[34px] items-center border-t border-[#2b323d] pl-1.5 pr-3">
          <input id="invert" type="checkbox" className="size-[15px] shrink-0 appearance-none rounded-xs bg-[#f4f4f4]" />
          <label htmlFor="invert" className="ml-[5px] flex-1 overflow-hidden whitespace-nowrap"><u>I</u>nvert f</label>
          <button aria-label="Collapse tree"><Chevrons /></button>
        </div>
      </div>
      <div className="ml-[5px] mt-[2px]">
        <LayerTable />
        <div className="ml-[5px] mt-1.5 h-[7px] w-[47px] rounded-full bg-[#566377]" />
      </div>
    </div>
    <p className="mb-[14px] mt-auto pl-[5px]">All: 7 layers displayed of 7 total layers</p>
  </aside>
);

/* ---------- drawing area ---------- */

type Point = [number, number];

const v: Record<string, Point> = {
  A: [375, 87], B: [619, 92], C: [999, 143], D: [1098, 503], E: [1150, 753], F: [863, 1078],
  G: [621, 1073], H: [238, 1020], I: [145, 658], J: [90, 412], K: [535, 669], L: [703, 495],
};

const backFaces: [string, string][] = [
  ['LAC', '#6e7272'], ['LIA', '#888c8c'], ['LGI', '#949898'], ['LEG', '#909494'],
  ['LCE', '#7e8282'], ['AIJ', '#7c8080'], ['GHI', '#747878'], ['EFG', '#828484'],
];

const frontFaces: [string, string][] = [
  ['KBJ', '#8a8e8e'], ['KBD', '#8a8f8f'], ['ABJ', '#808484'], ['BCD', '#5a5e5c'], ['KDF', '#6a6e6e'],
  ['DEF', '#6a6e6e'], ['KFH', '#4a4a4e'], ['KHJ', '#727274'], ['ABC', '#606060'], ['FGH', '#404444'],
  ['HIJ', '#6a6e6e'], ['CDE', '#606464'],
];

const backEdges = ['AL', 'CL', 'EL', 'GL', 'IL', 'AI', 'GI', 'EG', 'AC', 'CE'];
const frontEdges = ['AB', 'BC', 'CD', 'DE', 'EF', 'FG', 'GH', 'HJ', 'HI', 'IJ', 'HF', 'AJ', 'BJ', 'BK', 'BD', 'KJ', 'KD', 'KH', 'KF', 'DF'];

const poly = (names: string) => names.split('').map((n) => v[n].join(',')).join(' ');

const Icosahedron: React.FC = () => (
  <svg viewBox="0 0 1260 1140" className="absolute left-[519px] top-[173px] w-[420px]" role="img" aria-label="Icosahedron">
    <defs>
      <linearGradient id="axisX" x1="0" y1="0" x2="0" y2="1"><stop offset="0" stopColor="#c25a5a" /><stop offset=".5" stopColor="#e57a7a" /><stop offset="1" stopColor="#7e3434" /></linearGradient>
      <linearGradient id="axisY" x1="0" y1="0" x2="0" y2="1"><stop offset="0" stopColor="#2f7a30" /><stop offset=".5" stopColor="#459b46" /><stop offset="1" stopColor="#2f7a30" /></linearGradient>
      <linearGradient id="axisZ" x1="0" y1="0" x2="1" y2="0"><stop offset="0" stopColor="#2f4f86" /><stop offset=".5" stopColor="#4f75b5" /><stop offset="1" stopColor="#2f4f86" /></linearGradient>
    </defs>
    {backFaces.map(([f, color]) => <polygon key={f} points={poly(f)} fill={color} />)}
    {frontFaces.map(([f, color]) => <polygon key={f} points={poly(f)} fill={color} fillOpacity=".5" />)}
    {backEdges.map((e) => <polyline key={e} points={poly(e)} stroke="#c4c6c6" strokeWidth="3" />)}
    {frontEdges.map((e) => <polyline key={e} points={poly(e)} stroke="#fff" strokeWidth="3.500" />)}
    <g transform="translate(90 412)">
      <rect x="0" y="-10" width="148" height="21" rx="9" fill="url(#axisX)" transform="rotate(30)" />
      <rect x="5" y="-10" width="146" height="21" rx="4" fill="url(#axisY)" transform="rotate(-30)" />
      <rect x="-12" y="-154" width="21" height="160" rx="7" fill="url(#axisZ)" />
      <ellipse cx="-3" cy="-147" rx="6" ry="5" fill="#8fc1f0" />
    </g>
    <g fill="none" strokeWidth="3">
      <path d="M81 203h44L83 247h43" stroke="#0b57f0" />
      <path d="M208 277l22 21 22-21M230 298v20" stroke="#12b512" />
      <path d="M208 426l44 44M252 426l-44 44" stroke="#e02323" />
    </g>
  </svg>
);

const ViewCube: React.FC = () => (
  <div className="absolute right-4 top-[73px] flex flex-col items-center">
    <svg width="138" height="116" viewBox="0 0 138 116" fontFamily="'Liberation Sans Narrow', 'Liberation Sans', sans-serif" fontWeight="700" role="img" aria-label="View cube">
      <defs>
        <linearGradient id="face" x1="0" y1="0" x2="0" y2="1"><stop offset="0" stopColor="#c9c9ca" /><stop offset="1" stopColor="#aeafb1" /></linearGradient>
      </defs>
      <ellipse cx="69" cy="70" rx="60" ry="38" fill="none" stroke="#4b5059" strokeWidth="14" />
      <ellipse cx="69" cy="74" rx="42" ry="20" fill="#222933" />
      <g fill="#b9bbbd" fontFamily="Liberation Sans, sans-serif" fontSize="19" textAnchor="middle">
        <text x="27" y="46" fontSize="17" transform="rotate(28 27 40)">W</text>
        <text x="111" y="46" fontSize="16" transform="rotate(-30 111 40)">N</text>
        <text x="20" y="103" transform="rotate(-30 20 96)">S</text>
        <text x="117" y="103" transform="rotate(35 117 96)">E</text>
      </g>
      <path d="M69 3l37 18-37 20-37-20z" fill="#c3c4c5" />
      <path d="M32 21l37 20v43L34 62z" fill="url(#face)" />
      <path d="M106 21L69 41v43l35-22z" fill="url(#face)" />
      <path d="M32 21l37 20 37-20M69 41v43" stroke="#3f444c" fill="none" strokeDasharray="3 1" />
      <path d="M69 34l7 4v8l-7 4-7-4v-8z" fill="#9aa9b8" opacity=".6" />
      <g fill="#3f444d" fontSize="9" textAnchor="middle">
        <text x="69" y="24" transform="rotate(24 69 20)">TOP</text>
        <text transform="translate(50 57) rotate(26)">FRONT</text>
        <text transform="translate(88 57) rotate(-28)">RIGHT</text>
      </g>
    </svg>
    <button className="mt-[18px] flex h-[21px] w-[57px] items-center justify-center gap-1.5 rounded border border-[#c3c4cf] bg-[#a3a5b3] font-['Liberation_Sans',sans-serif] text-[13px] text-[#5a5d68]">
      WCS
      <Svg w={10} h={6}><path d="M0 0h10L5 6z" fill="#c9cad4" stroke="#7c7f8c" strokeWidth=".6" /></Svg>
    </button>
  </div>
);

const NavBar: React.FC = () => (
  <div className="absolute right-px top-[257px]">
    <svg width="40" height="260" viewBox="0 0 40 260" fill="none" stroke="#444a54" strokeWidth="1.500" role="img" aria-label="Navigation bar">
      <rect x="0" y="0" width="40" height="260" rx="3" fill="#5a5e62" stroke="none" />
      <circle cx="33" cy="6" r="4" /><path d="M31 4l4 4M35 4l-4 4" strokeWidth="1" />
      <path d="M20 22h14v13a14 14 0 1 1-14-13z" fill="#5d6270" /><circle cx="20" cy="35" r="7.500" fill="#5a5e62" /><path d="M10 45l5-5M30 45l-5-5" />
      <path d="M17 59h7l-3.500 4zM17 146h7l-3.500 4zM17 193h7l-3.500 4z" fill="#3f454e" stroke="none" />
      <path d="M3 69h34M3 203h34" stroke="#6d7175" strokeWidth="1" />
      <path d="M14 101L6 90c-1-3 2-3 4-1l4 4-3-14c0-3 3-3 4 0l3 9-1-13c1-3 4-3 4 0l1 12 3-11c1-3 4-2 4 0l-3 14 4-7c2-2 4-1 3 2l-7 16z" fill="#5d6270" />
      <path d="M6 110l19 19M24 110L6 128" strokeWidth="2" /><path d="M5 109h6l-6 6zM25 109h-6l6 6zM5 128h6l-6-6z" fill="#444a54" />
      <circle cx="26" cy="127" r="7" fill="#5d6270" /><path d="M31 132l4 4" strokeWidth="4" />
      <path d="M19 156l5 6h-3v21h-5v-21h-3z" fill="#5d6270" /><path d="M14 166c-13 3-11 9 0 10M23 166c16 2 13 10 0 11M8 176l6-4v8z" />
      <rect x="6" y="208" width="7" height="8" /><rect x="16" y="208" width="7" height="8" /><rect x="26" y="208" width="7" height="8" />
      <rect x="6" y="220" width="19" height="16" /><path d="M12 223l8 5-8 5z" fill="#444a54" stroke="none" />
      <circle cx="33" cy="253" r="4" /><path d="M31 252h4" strokeWidth="1" />
    </svg>
  </div>
);

const CommandLine: React.FC = () => (
  <div className="flex h-[72px] shrink-0">
    <div className="flex w-[31px] flex-col items-center bg-[#2c333f] pt-1">
      <Svg w={21} h={7}><path d="M0 1.500h21M0 5.500h21" stroke="#b4b8c0" strokeWidth="2" strokeDasharray="2 1.500" /></Svg>
      <button aria-label="Close command line" className="mr-1 mt-[9px]"><Svg w={12}><path d="M1 1l10 10M11 1L1 11" stroke="#b4b8c0" strokeWidth="2.200" /></Svg></button>
      <button aria-label="Customize command line" className="mr-1 mt-3.5"><Svg><path d="M2 18L12 8" stroke="#b4b8c0" strokeWidth="3" strokeLinecap="round" /><path d="M17 1l-3 3 2 2 3-3c2 4-2 8-6 6l-2-2c-1-4 2-7 6-6z" fill="#b4b8c0" /></Svg></button>
    </div>
    <div className="flex w-[72%] flex-col font-['DejaVu_Sans_Mono',monospace] text-sm text-[#16181b]">
      <div className="flex h-[47px] flex-col justify-end overflow-hidden whitespace-pre bg-[#969899] pb-px pl-[3px] leading-[19px]">
        <p>Window Lasso  Press Spacebar to cycle options</p>
        <p>Command:</p>
        <p>Command:</p>
      </div>
      <div className="mt-px flex h-6 items-center bg-[#bcbec0] pl-[5px]">
        <Svg w={20} h={16}><path d="M.5.500h19v15H.5z" stroke="#6b6d70" fill="#aeb0b2" /><path d="M0 0h20v4H0z" fill="#5d5f62" /><path d="M3 7l3 2-3 2M8 12h4" stroke="#55575a" /></Svg>
        <Svg w={10} h={6} className="ml-0.5"><path d="M0 0h10L5 6z" fill="#4b4d50" /></Svg>
        <input type="text" aria-label="Command" placeholder="Type a command" className="ml-2 flex-1 bg-transparent italic placeholder:text-[#5d6064]" />
        <Svg w={9} h={6} className="mr-1.5"><path d="M0 6h9L4.500 0z" fill="#5d5f62" /></Svg>
      </div>
    </div>
    <div className="ml-[86px] flex flex-col pt-[18px] text-[#85888c]">
      <span className="text-lg leading-[26px]">Activate Windows</span>
      <span className="whitespace-nowrap leading-5">Go to Settings to activate Windows.</span>
    </div>
  </div>
);

const Canvas: React.FC = () => (
  <main className="flex min-w-0 flex-1 flex-col border-b-5 border-t-5 border-[#3b4453] bg-[#222933]">
    <div className="relative flex-1">
      <div className="flex items-center justify-between pl-[5px] pr-[10px] pt-[5px]">
        <span className="leading-5">[−][SE Isometric][X-Ray]</span>
        <div className="flex items-center gap-3">
          <button aria-label="Minimize drawing"><Svg w={14}><path d="M0 11h14" stroke="#f0f0f0" strokeWidth="3" /></Svg></button>
          <button aria-label="Restore drawing"><Svg w={14}><path d="M2 5h8v8H2z" stroke="#f0f0f0" strokeWidth="2.500" /><path d="M4 1h9v9" stroke="#f0f0f0" strokeWidth="1.500" /></Svg></button>
          <button aria-label="Close drawing window"><Svg w={12}><path d="M1 1l10 10M11 1L1 11" stroke="#f0f0f0" strokeWidth="3" /></Svg></button>
        </div>
      </div>
      <Icosahedron />
      <ViewCube />
      <NavBar />
    </div>
    <CommandLine />
  </main>
);

/* ---------- status bar ---------- */

const Cell: React.FC<{ name: string; className: string; on?: boolean; children: React.ReactNode }> = ({ name, className, on, children }) => (
  <button aria-label={name} className={clsx('flex h-[29px] shrink-0 items-center justify-center', on ? 'bg-[#5f8dc4]' : 'bg-[#3b4453]', className)}>
    {children}
  </button>
);

const Annot: React.FC<{ children?: React.ReactNode }> = ({ children }) => (
  <Svg><path d="M9 1c3 6 4 9 4 10l4 8-6-3H8l-6 3 4-8c0-1 1-5 3-10z" fill="#f0f0f0" />{children}</Svg>
);

const StatusBar: React.FC = () => (
  <footer className="flex h-9 shrink-0 bg-[#222933]">
    <nav className="flex h-[29px] flex-1 items-center pl-5">
      <button aria-label="Layout menu"><Hamburger /></button>
      <button className="ml-[11px] h-full w-[86px] bg-[#3b4453] pt-px font-bold [clip-path:polygon(12px_0,100%_0,calc(100%-12px)_100%,0_100%)]">Model</button>
      <button className="w-[99px] pt-px">A3-Rep.Dig.</button>
      <Slash />
      <button aria-label="New layout" className="ml-[14px]"><Plus /></button>
      <Slash className="ml-3" />
    </nav>
    <div className="flex pt-[3px]">
      <Cell name="Model space" className="mr-[3px] w-[59px]">MODEL</Cell>
      <Cell name="Grid" className="w-[29px]"><Svg><path d="M5 1v18M10 1v18M15 1v18M0 5h20M0 10h20M0 15h20" stroke="#f0f0f0" strokeWidth="1.200" /></Svg></Cell>
      <Cell name="Snap" className="w-8"><Svg w={16}><path d="M0 2h16M0 8h16M0 14h16" stroke="#f0f0f0" strokeWidth="2.500" strokeDasharray="2.500 4" /></Svg></Cell>
      <Cell name="Snap settings" className="mr-[3px] w-5"><Caret big /></Cell>
      <Cell name="Ortho" className="w-[29px]" on><Svg><path d="M1 0v19h19" stroke="#fff" strokeWidth="1.300" /><path d="M1 13h6v6" stroke="#fff" /></Svg></Cell>
      <Cell name="Polar" className="w-8"><Svg><circle cx="9" cy="11" r="7.500" stroke={GREY} strokeWidth="1.200" /><path d="M9 11h11M9 11l8-10" stroke={GREY} strokeWidth="1.200" /></Svg></Cell>
      <Cell name="Polar settings" className="w-5"><Caret big /></Cell>
      <Cell name="Isodraft" className="w-[30px]"><Svg><path d="M2 2l16 16" stroke="#d25a64" strokeWidth="1.200" /><path d="M10 0v20" stroke="#4fae76" strokeWidth="1.300" /><path d="M8 9h4v4H8z" stroke={GREY} /></Svg></Cell>
      <Cell name="Isodraft settings" className="mr-px w-5"><Caret big /></Cell>
      <Cell name="Object snap tracking" className="mr-0.5 w-7" on><Svg><path d="M16 1L2 17h18" stroke="#fff" strokeWidth="1.300" /><path d="M7 8h4v4H7z" fill="#fff" /></Svg></Cell>
      <Cell name="Object snap" className="w-[29px]" on><Svg><path d="M5 3h14v16H3V7" stroke="#fff" strokeWidth="1.300" /><path d="M1 1h5v5H1z" stroke="#fff" strokeWidth="1.300" /></Svg></Cell>
      <Cell name="Object snap settings" className="mr-1 w-5"><Caret big /></Cell>
      <Cell name="Annotation visibility" className="w-[29px]" on><Annot><circle cx="16" cy="4" r="3" stroke="#fff" /></Annot></Cell>
      <Cell name="Autoscale" className="w-[30px]"><Annot><path d="M17 0l-4 5h3l-2 4 5-5h-3z" fill="#fff" /></Annot></Cell>
      <Cell name="Annotation scale" className="w-[30px]"><Annot /></Cell>
      <Cell name="Scale" className="mr-[3px] w-[43px] gap-1.5 text-[13px]">1:1<Caret big /></Cell>
      <Cell name="Workspace" className="mr-px w-[50px] gap-2"><Svg><circle cx="10" cy="10" r="5" stroke={GREY} strokeWidth="4" /><path d="M10 0v4M10 16v4M0 10h4M16 10h4M3 3l3 3M14 14l3 3M3 17l3-3M14 6l3-3" stroke={GREY} strokeWidth="3" /></Svg><Caret big /></Cell>
      <Cell name="Annotation monitor" className="mr-[3px] w-[30px]"><Plus /></Cell>
      <Cell name="Isolate objects" className="mr-[3px] w-[30px]"><Svg><path d="M1 1h7v7H1zM8 11l5 8H3z" stroke={GREY} strokeWidth="1.300" /><circle cx="15" cy="9" r="4" stroke={GREY} strokeWidth="1.300" /></Svg></Cell>
      <Cell name="File trust" className="mr-[3px] w-[38px]"><Svg><path d="M2 0h10l5 5v6H2z" fill="#3b82c4" /><path d="M2 11l8 1 5 3v4H2z" fill="#fdb92b" /><path d="M8 1v10M3 7h10" stroke="#fff" /><Check x={9} y={9} s={0.8} /></Svg></Cell>
      <Cell name="Clean screen" className="mr-0.5 w-[30px]"><Svg><path d="M1 3h18v14H1z" stroke={GREY} strokeWidth="1.300" /><path d="M17 5v4l-4-4zM3 15v-4l4 4z" fill={GREY} /></Svg></Cell>
      <Cell name="Customization" className="w-[29px]"><Hamburger /></Cell>
    </div>
  </footer>
);

/* ---------- taskbar ---------- */

const taskbarApps: { name: string; open: boolean; icon: React.ReactNode }[] = [
  { name: 'Start', open: false, icon: <><path d="M1 1h13v13H1zM16 1h13v13H16z" fill="#2fb2f5" /><path d="M1 16h13v13H1zM16 16h13v13H16z" fill="#0a7fd8" /></> },
  { name: 'File Explorer', open: true, icon: <><path d="M0 1h10l3 4h-3v6H0z" fill="#e0a20c" /><path d="M0 6h11l3-3h16v25H0z" fill="#fdcb3e" /><path d="M6 28v-5a3 3 0 0 1 3-3h12a3 3 0 0 1 3 3v5z" fill="#1079c8" /><path d="M10 24h10" stroke="#0a4f8c" /></> },
  { name: 'Firefox profile', open: true, icon: <><circle cx="15" cy="15" r="14" fill="#7d0bd6" /><path d="M15 15c-2-4-9-5-9 0s7 4 9 0c2-4 9-5 9 0s-7 4-9 0z" stroke="#fff" strokeWidth="4" fill="none" /><circle cx="24" cy="23" r="6.500" fill="#ff7a2e" /><circle cx="24" cy="23" r="3" fill="#8a4fd8" /></> },
  { name: 'PowerPoint', open: false, icon: <><circle cx="17" cy="15" r="13.500" fill="#ff8f6b" /><path d="M17 15h13.500a13.500 13.500 0 0 1-27 0z" fill="#d35230" /><rect x="0" y="8" width="15" height="15" rx="1" fill="#c43e1c" /><text x="3" y="20" fill="#fff" fontSize="13" fontWeight="700">P</text></> },
  { name: 'Word', open: true, icon: <><path d="M7 2h23v7H7z" fill="#41a5ee" /><path d="M7 9h23v7H7z" fill="#2b7cd3" /><path d="M7 16h23v6H7z" fill="#185abd" /><path d="M7 22h23v6H7z" fill="#103f91" /><rect x="0" y="8" width="15" height="15" rx="1" fill="#185abd" /><text x="1" y="20" fill="#fff" fontSize="12" fontWeight="700">W</text></> },
  { name: 'Fusion', open: false, icon: <><path d="M2 3l3-3v27l-3 2z" fill="#ffa15c" /><path d="M4 0h22v21H4z" fill="#ff6b00" /><path d="M4 21h22v9H4z" fill="#8a3c00" /><path d="M26 0l2 3v27h-2z" fill="#b34b00" /><text x="11" y="17" fill="#fff" fontSize="15" fontWeight="700">F</text><text x="9" y="28" fill="#fff" fontSize="6" fontWeight="700">FUS</text></> },
  { name: 'Sketch', open: false, icon: <><rect x="3" y="3" width="24" height="24" rx="3" fill="#fff" /><path d="M6 22C10 12 18 2 22 9c2 3 1 7 1 10" stroke="#4a72d0" strokeWidth="2.500" fill="none" /></> },
  { name: 'OBS', open: false, icon: <><circle cx="15" cy="15" r="13" fill="#1d1d1f" /><path d="M15 15c-5-1-6-5-4-9M15 15c4-3 8-2 10 2M15 15c1 5-3 9-8 8" stroke="#bdbdbd" strokeWidth="1.800" fill="none" /></> },
  { name: 'Firefox', open: true, icon: <><path d="M15 29C7 29 1 23 1 16c0-4 1-7 3-10l1 4c3-4 5-2 8-2l5-8c1 4 6 5 9 9 1 2 2 4 2 7 0 7-6 13-14 13z" fill="#ff5a3c" /><path d="M19 0c1 4 8 6 10 15 0 5-3 9-6 11 2-6 0-13-6-16z" fill="#ffc93a" /><circle cx="15" cy="16" r="6.500" fill="#7a42d8" /><path d="M4 14c4-2 8 0 10 2-4 1-4 5 1 6-6 2-11-3-11-8z" fill="#ff8c2e" /></> },
  { name: 'Calculator', open: true, icon: <><rect x="3" y="0" width="23" height="30" rx="1.500" fill="#6c7a86" /><path d="M6 3h17v5H6z" fill="#3fd0f5" /><path d="M6 11h5v4H6zM12 11h5v4h-5zM18 11h5v4h-5zM6 17h5v4H6zM12 17h5v4h-5zM6 23h5v4H6zM12 23h5v4h-5z" fill="#d9e0e5" /><path d="M18 17h5v10h-5z" fill="#0b4a8f" /></> },
  { name: 'AutoCAD', open: true, icon: <><path d="M1 3l3-3v22l-3 2z" fill="#f0557f" /><path d="M4 0h22v21H4z" fill="#e6114f" /><path d="M4 21h22v9H4z" fill="#750726" /><path d="M26 0l2 3v27h-2z" fill="#8c0a33" /><text x="10" y="17" fill="#fff" fontSize="15" fontWeight="700">A</text><text x="8" y="28" fill="#fff" fontSize="6" fontWeight="700">CAD</text></> },
  { name: 'Spotify', open: true, icon: <><circle cx="15" cy="15" r="14.500" fill="#1ed760" /><path d="M6 11c7-2 13-1 18 2M7 16c6-2 11-1 15 1.500M8 20.500c5-1 9-1 12 1.500" stroke="#111" strokeWidth="2.500" strokeLinecap="round" fill="none" /></> },
  { name: 'Snipping Tool', open: true, icon: <><path d="M3 24V10h14" stroke="#e04a1a" strokeWidth="3" strokeDasharray="3 1.500" fill="none" /><path d="M18 12v14M5 25h16" stroke="#7b8794" strokeWidth="3" /><circle cx="27" cy="23" r="2.500" stroke="#2aa5e8" strokeWidth="2" fill="none" /><path d="M18 25v5M20 25l5-1" stroke="#2aa5e8" strokeWidth="2" /></> },
];

const Taskbar: React.FC = () => (
  <div className="flex h-[58px] shrink-0 items-center border-t border-[#c4c5c7] bg-[#eeeeee] pl-[13px] pr-[23px] text-[#1b1b1b]">
    <div className="flex">
      {taskbarApps.map((app) => (
        <button key={app.name} aria-label={app.name} className="flex h-[57px] w-[55px] flex-col items-center pt-[14px]">
          <Svg w={30}>{app.icon}</Svg>
          {app.open && <span className={clsx('mt-1.5 h-1 rounded-full bg-[#868686]', app.name === 'Snipping Tool' ? 'w-4' : 'w-2')} />}
        </button>
      ))}
    </div>
    <span className="flex-1" />
    <button aria-label="Show hidden icons"><Svg w={12} h={8}><path d="M1 7l5-5 5 5" stroke="#1b1b1b" strokeWidth="1.600" /></Svg></button>
    <button aria-label="Windows Update" className="ml-6"><Svg w={20}><path d="M1 10C1 2 12-2 18 6M18 1v5h-5M8 19c-3-1-5-2-7-5M1 19v-5h5" stroke="#1b1b1b" strokeWidth="1.300" /><circle cx="15" cy="15" r="5" fill="#0078d7" /></Svg></button>
    <button className="ml-[22px] text-center leading-5">ENG<br />PT</button>
    <button aria-label="Network, volume and battery" className="ml-6 flex items-center gap-3">
      <Svg w={18}><path d="M1 7c5-5 11-5 16 0" stroke="#a8a8a8" strokeWidth="1.400" /><path d="M3.500 10c3.500-3.500 7.500-3.500 11 0M6 13c2-2 4-2 6 0" stroke="#1b1b1b" strokeWidth="1.400" /><circle cx="9" cy="15" r="1.500" fill="#1b1b1b" /></Svg>
      <Svg w={18}><path d="M1 7h3l4-4v12l-4-4H1z" stroke="#1b1b1b" strokeWidth="1.300" /><path d="M11 6c1 2 1 4 0 6M13 4c2 3 2 7 0 10" stroke="#1b1b1b" strokeWidth="1.300" /><path d="M15 2c3 4 3 10 0 14" stroke="#a8a8a8" strokeWidth="1.200" /></Svg>
      <Svg w={20} h={18}><rect x="2" y="5" width="15" height="10" rx="2" fill="#1b1b1b" /><path d="M18 8h2v4h-2z" fill="#1b1b1b" /><path d="M4 0L0 6h3l-2 4 6-6H4l2-4z" fill="#1b1b1b" stroke="#eee" strokeWidth=".7" /></Svg>
    </button>
    <button className="ml-[23px] text-right leading-5">2:43 PM<br />10/21/2025</button>
  </div>
);

const App: React.FC = () => (
  <div className="flex h-screen flex-col overflow-hidden bg-[#222933] font-['Open_Sans',sans-serif] text-sm text-[#f0f0f0]">
    <TitleBar />
    <RibbonTabs />
    <Ribbon />
    <FileTabs />
    <div className="flex min-h-0 flex-1">
      <LayerManager />
      <Canvas />
    </div>
    <StatusBar />
    <Taskbar />
  </div>
);

export default App;
